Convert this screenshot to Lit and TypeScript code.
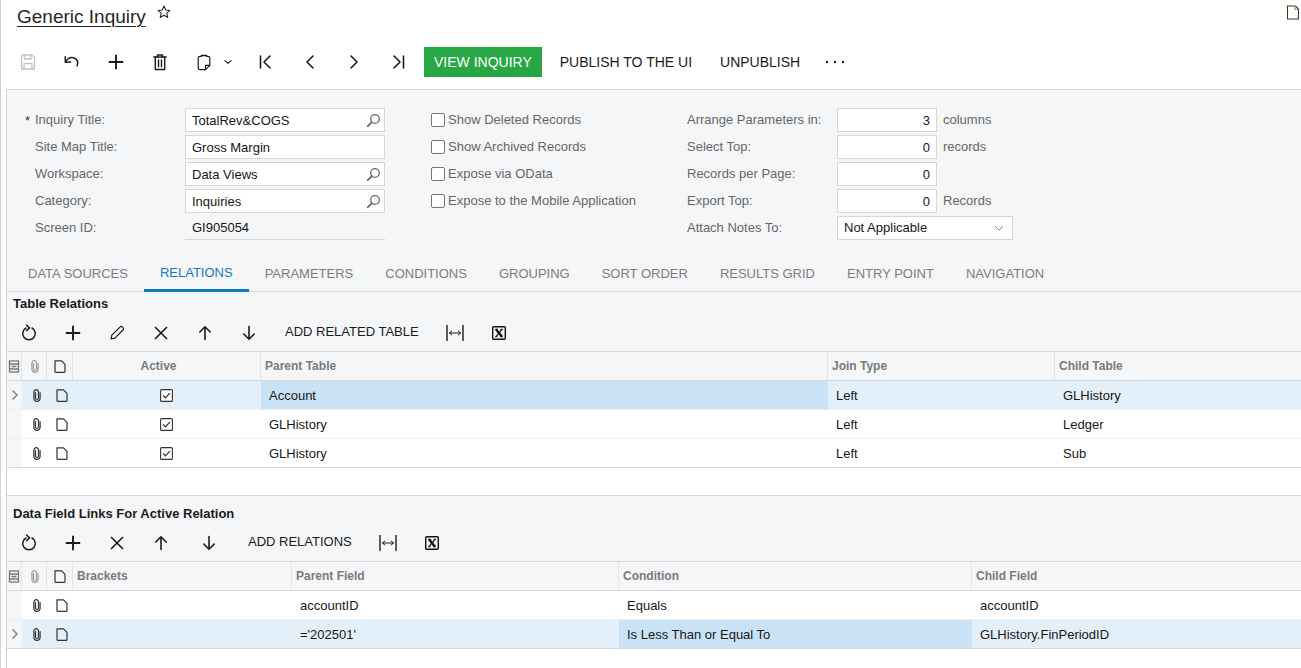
import { LitElement, html, css, svg, nothing } from "lit";
import { customElement } from "lit/decorators.js";

const ic = (body: unknown, size = 20, cls = "") =>
  html`<svg class="ic ${cls}" width=${size} height=${size} viewBox="0 0 20 20" fill="none" stroke="currentColor" stroke-width="1.4" stroke-linecap="round" stroke-linejoin="round">${body}</svg>`;

const I = {
  save: () => ic(svg`<path d="M3.500 3h10.500l2.500 2.500v11.500h-13z"/><path d="M6.500 3v4h6.500v-4"/><path d="M6 17v-5.500h8v5.500"/>`, 20, "dis"),
  undo: () => ic(svg`<path d="M3.500 10c2-3.600 5-5 8-4.300 3.700 1 5.300 4.800 3.600 8.300" stroke-width="1.500"/><path d="M3.200 4.800l.2 5.400 5.300-.3" stroke-width="1.500"/>`),
  plus: () => ic(svg`<path d="M10 2.800v14.400M2.800 10h14.400" stroke-width="1.900" stroke-linecap="butt"/>`),
  trash: () => ic(svg`<path d="M3.800 5h12.400"/><path d="M7.500 5v-2h5v2"/><path d="M5.300 5v12.500h9.400v-12.500"/><path d="M8.500 8v6.800M11.500 8v6.800"/>`, 20),
  copy: () => ic(svg`<path d="M7.500 4.300h-1.500c-1 0-1.800.8-1.800 1.800v9.800c0 1 .8 1.800 1.800 1.800h5.500l4.300-4.300v-7.300c0-1-.8-1.800-1.800-1.800h-1.500" stroke-width="1.200"/><path d="M7.500 3.500h5" stroke-width="1.600"/><path d="M11.500 17.700v-4.400h4.300" stroke-width="1.200"/>`),
  chev: () => ic(svg`<path d="M5.500 8l4.500 4 4.500-4" stroke-width="1.600"/>`, 14),
  ddl: () => html`<svg class="ic" width="10" height="10" viewBox="0 0 10 10" fill="none" stroke="#8a8a8a" stroke-width="1"><path d="M1 3.200l4 3.800 4-3.800"/></svg>`,
  first: () => ic(svg`<path d="M4.500 4v12M14 4l-6 6 6 6" stroke-width="1.600"/>`),
  prev: () => ic(svg`<path d="M13 4l-6 6 6 6" stroke-width="1.600"/>`),
  next: () => ic(svg`<path d="M7 4l6 6-6 6" stroke-width="1.600"/>`),
  last: () => ic(svg`<path d="M15.500 4v12M6 4l6 6-6 6" stroke-width="1.600"/>`),
  dots: () => html`<svg class="ic" width="20" height="20" viewBox="0 0 20 20" fill="currentColor"><circle cx="2" cy="10" r="1.200"/><circle cx="10" cy="10" r="1.200"/><circle cx="18" cy="10" r="1.200"/></svg>`,
  star: () => ic(svg`<path d="M10 2.500l2.200 5 5.300.5-4 3.500 1.200 5.300-4.700-2.800-4.700 2.800 1.200-5.300-4-3.500 5.300-.5z" stroke-width="1.300"/>`, 16),
  doc: () => html`<svg class="ic" width="14" height="15" viewBox="0 0 14 15" fill="none" stroke="#3a3a20" stroke-width="1.100"><path d="M1.500 1h8l3 3v10h-11z" fill="#fff"/><path d="M9 1v3.500h3.500" stroke="#8a9a40"/></svg>`,
  refresh: () => ic(svg`<path d="M13 5a6.300 6.300 0 1 1-6 0" stroke-width="1.500"/><path d="M7.500 2l3 2.900-3 2.900" stroke-width="1.500"/>`),
  pencil: () => ic(svg`<path d="M4 16l.8-3.800 8.400-8.400a1.400 1.400 0 0 1 2 0l1 1a1.400 1.400 0 0 1 0 2l-8.400 8.400z" stroke-width="1.200"/>`),
  x: () => ic(svg`<path d="M4 4l12 12M16 4l-12 12" stroke-width="1.600" stroke-linecap="butt"/>`),
  up: () => ic(svg`<path d="M10 16.500v-12.500M4.800 9l5.200-5.200 5.200 5.200" stroke-width="1.600"/>`),
  down: () => ic(svg`<path d="M10 3.500v12.500M4.800 11l5.200 5.200 5.200-5.200" stroke-width="1.600"/>`),
  fit: () => ic(svg`<path d="M2 2v16M18 2v16" stroke-width="1.400" stroke-linecap="butt"/><path d="M4.500 10h11M6.800 8l-2.300 2 2.300 2M13.200 8l2.300 2-2.300 2" stroke-width="1"/>`),
  excel: () => html`<svg class="ic" width="16" height="16" viewBox="0 0 16 16" fill="none"><rect x="1.700" y="1.700" width="12.600" height="12.600" rx="1" stroke="#111" stroke-width="1.400"/><path d="M5 4.300l6 7.400" stroke="#111" stroke-width="2.400"/><path d="M11 4.300l-6 7.400" stroke="#111" stroke-width="1.200"/><path d="M4 4.300h3M9.400 4.300h2.700M4 11.700h2.700M9 11.700h3" stroke="#111" stroke-width=".9"/></svg>`,
  search: () => html`<svg class="ic" width="15" height="15" viewBox="0 0 15 15" fill="none" stroke="#666" stroke-width="1.300" stroke-linecap="round"><circle cx="9" cy="6" r="4.300"/><path d="M5.800 9.200l-4 4" stroke-width="1.800"/></svg>`,
  selChev: () => html`<svg class="ic" width="12" height="12" viewBox="0 0 12 12" fill="none" stroke="#8a8a8a" stroke-width="1.600"><path d="M3.500 1.500l4.500 4.500-4.500 4.500"/></svg>`,
  clip: (c = "#333") => html`<svg class="ic" width="10" height="13" viewBox="0 0 10 13" fill="none" stroke=${c} stroke-width="1.200" stroke-linecap="round"><path d="M3.500 3.500v5.500a1.500 1.500 0 0 0 3 0v-6a2.300 2.300 0 0 0-4.600 0v6.300a3.100 3.100 0 0 0 6.200 0v-5.800"/></svg>`,
  note: () => html`<svg class="ic" width="12" height="13" viewBox="0 0 12 13" fill="none" stroke="#333" stroke-width="1.200" stroke-linejoin="round"><path d="M1 .8h6.500l3.500 3.500v7.400a.7.700 0 0 1-.7.700h-8.600a.7.700 0 0 1-.7-.7z"/></svg>`,
  group: () => html`<svg class="ic" width="12" height="13" viewBox="0 0 12 13" fill="none" stroke="#777" stroke-width="1.300"><rect x="1.500" y="1" width="9" height="11"/><path d="M1.500 4h9M3.500 6.500h5M1.500 9h9"/></svg>`,
  check: () => html`<svg class="ic" width="13" height="13" viewBox="0 0 13 13" fill="#fff" stroke="#333" stroke-width="1.100"><rect x=".6" y=".6" width="11.800" height="11.800" rx="1"/><path d="M3.200 6.500l2.300 2.400 4.300-4.800" fill="none" stroke-width="1.300"/></svg>`,
};

type Row = { cells: string[]; sel?: boolean; activeCell?: number; check?: boolean };

@customElement("app-root")
export class AppRoot extends LitElement {
  static styles = css`
    :host { display: block; width: 1301px; height: 668px; overflow: hidden; background: #fff;
      font-family: "Liberation Sans", Arial, sans-serif; font-size: 13px; color: #1c1c1c; }
    * { box-sizing: border-box; }
    .ic { display: block; flex: none; }
    .page { height: 668px; border-left: 1px solid #d2d2d2; padding-left: 5px; display: flex; flex-direction: column; }
    .title-row { height: 47px; display: flex; align-items: flex-start; padding: 0 1px 0 11px; }
    .title { font-size: 19px; line-height: 24px; margin-top: 5px; color: #262626; text-decoration: underline; text-decoration-thickness: 1px; text-underline-offset: 3px; }
    .star { margin: 4px 0 0 10px; color: #222; }
    .doc { margin: 5px 0 0 auto; }
    .tb { display: flex; align-items: center; color: #1b1b1b; }
    .tb.main { height: 42px; align-items: flex-start; }
    .btn { width: 44px; height: 30px; display: flex; align-items: center; justify-content: center; flex: none; }
    .btn.dis { color: #c4c4c4; }
    .btn.copy { width: 62px; justify-content: flex-start; gap: 7px; padding-left: 12px; }
    .btn.wide { width: 51px; }
    .txt { font-size: 14px; line-height: 30px; padding: 0 14px; white-space: nowrap; }
    .primary { background: #28a745; color: #fff; padding: 0 10px; margin: 0 4px; }
    .dotsbtn { width: 42px; }
    .body { flex: 1; border-left: 1px solid #d2d2d2; border-top: 1px solid #d6d6d6; display: flex; flex-direction: column; min-height: 0; }
    .top { background: #f5f6f8; }
    .form { display: flex; padding: 18px 0 0 18px; height: 165px; }
    .c1 { width: 360px; } .c2 { width: 256px; margin-left: 46px; } .c3 { width: 340px; }
    .fr { height: 24px; margin-bottom: 3px; display: flex; align-items: center; color: #666; white-space: nowrap; position: relative; }
    .c1 .fr label { width: 160px; padding-left: 10px; margin-top: -2px; position: relative; }
    .req { position: absolute; left: 0; top: 1px; color: #333; }
    .c3 .fr label { width: 150px; margin-top: -2px; }
    .inp { height: 24px; background: #fff; border: 1px solid #d4d6d9; color: #161616; display: flex; align-items: center; padding: 0 6px; justify-content: space-between; }
    .w200 { width: 200px; } .w100 { width: 100px; justify-content: flex-end; } .w176 { width: 176px; padding-right: 8px; }
    .w176 span { margin-top: -2px; }
    .w200 svg { margin-right: -3px; }
    .ro { width: 200px; height: 24px; padding: 0 7px; display: flex; align-items: center; color: #161616; border-bottom: 1px solid #d4d6d9; }
    .unit { margin-left: 6px; margin-top: -2px; }
    .cb { width: 14px; height: 14px; background: #fff; border: 1px solid #767676; border-radius: 2px; margin-right: 3px; flex: none; }
    .cbl { margin-top: -2px; }
    .tabs { display: flex; height: 37px; padding-left: 5px; border-bottom: 1px solid #d6d8db; font-size: 13px; color: #7c7c7c; }
    .tab { padding: 11px 16px 0; line-height: 16px; height: 37px; white-space: nowrap; }
    .tab.on { color: #1678bd; border-bottom: 3px solid #0d79bf; padding-top: 10px; }
    .sect { font-weight: bold; padding-left: 6px; line-height: 24px; height: 24px; color: #1a1a1a; }
    .sec2 { background: #f5f6f8; padding-top: 6px; border-top: 1px solid #d6d8db; }
    .t { height: 35px; align-items: flex-start; } .t .btn { height: 33px; } .t .txt { line-height: 31px; font-size: 13px; }
    .grid { border-top: 1px solid #d6d8db; }
    .row { display: grid; height: 29px; border-bottom: 1px solid #edf0f3; background: #fff; align-items: stretch; }
    .g1 .row { grid-template-columns: 15px 25px 26px 188px 567px 227px 1fr; }
    .g2 .row { grid-template-columns: 15px 25px 26px 219px 327px 353px 1fr; }
    .head.row { background: #f5f6f8; border-bottom: 1px solid #d6d8db; font-weight: bold; font-size: 12px; color: #7a7a7a; height: 29px; }
    .head .cell { border-right: 1px solid #e2e4e7; padding-left: 4px; color: #7a7a7a; }
    .head .cell:last-child { border-right: 0; }
    .cell { display: flex; align-items: center; padding-left: 8px; white-space: nowrap; color: #171717; min-width: 0; }
    .cell.ctr { justify-content: center; padding: 0 2px 0 0; }
    .head .cell.ctr { padding-left: 0; }
    .cell.ic-cell { justify-content: center; padding-left: 4px; }
    .head .cell.ic-cell { padding-left: 0; }
    .head .cell.clip-h { padding-left: 2px; }
    .head .cell.active-h { padding: 0 16px 0 0; }
    .cell.ind { background: #f5f6f8; padding: 0; justify-content: center; }
    .head .cell.ind { padding: 0; }
    .row.sel { background: #e3f0fa; }
    .cell.act { background: #c9e2f6; }
    .row:last-child { border-bottom-color: #d6d8db; }
    .gap { height: 27px; background: #fff; flex: none; }
    .rest { flex: 1; background: #fff; }
  `;

  private gridT(cls: string, head: string[], rows: Row[]) {
    return html`<div class="grid ${cls}">
      <div class="row head">
        <div class="cell ind">${I.group()}</div>
        <div class="cell ic-cell clip-h">${I.clip("#9a9a9a")}</div>
        <div class="cell ic-cell">${I.note()}</div>
        ${head.map((h) => html`<div class="cell ${h === "Active" ? "ctr active-h" : ""}">${h}</div>`)}
      </div>
      ${rows.map((r) => html`<div class="row ${r.sel ? "sel" : ""}">
        <div class="cell ind">${r.sel ? I.selChev() : nothing}</div>
        <div class="cell ic-cell">${I.clip()}</div>
        <div class="cell ic-cell">${I.note()}</div>
        ${r.cells.map((c, i) => html`<div class="cell ${i === r.activeCell ? "act" : ""} ${r.check && i === 0 ? "ctr" : ""}">${r.check && i === 0 ? I.check() : c}</div>`)}
      </div>`)}
    </div>`;
  }

  render() {
    const left = [
      { l: "Inquiry Title:", v: "TotalRev&COGS", s: true, req: true },
      { l: "Site Map Title:", v: "Gross Margin" },
      { l: "Workspace:", v: "Data Views", s: true },
      { l: "Category:", v: "Inquiries", s: true },
    ];
    const checks = ["Show Deleted Records", "Show Archived Records", "Expose via OData", "Expose to the Mobile Application"];
    const params = [
      { l: "Arrange Parameters in:", v: "3", u: "columns" },
      { l: "Select Top:", v: "0", u: "records" },
      { l: "Records per Page:", v: "0", u: "" },
      { l: "Export Top:", v: "0", u: "Records" },
    ];
    const tabs = ["DATA SOURCES", "RELATIONS", "PARAMETERS", "CONDITIONS", "GROUPING", "SORT ORDER", "RESULTS GRID", "ENTRY POINT", "NAVIGATION"];
    return html`<div class="page">
      <div class="title-row">
        <span class="title">Generic Inquiry</span>
        <span class="star">${I.star()}</span>
        <span class="doc">${I.doc()}</span>
      </div>
      <div class="tb main">
        <span class="btn dis">${I.save()}</span>
        <span class="btn">${I.undo()}</span>
        <span class="btn">${I.plus()}</span>
        <span class="btn">${I.trash()}</span>
        <span class="btn copy">${I.copy()}${I.chev()}</span>
        <span class="btn">${I.first()}</span>
        <span class="btn">${I.prev()}</span>
        <span class="btn">${I.next()}</span>
        <span class="btn">${I.last()}</span>
        <span class="txt primary">VIEW INQUIRY</span>
        <span class="txt">PUBLISH TO THE UI</span>
        <span class="txt">UNPUBLISH</span>
        <span class="btn dotsbtn">${I.dots()}</span>
      </div>
      <div class="body">
        <div class="top">
          <div class="form">
            <div class="c1">
              ${left.map((f) => html`<div class="fr">
                <label>${f.req ? html`<span class="req">*</span>` : nothing}${f.l}</label>
                <div class="inp w200"><span>${f.v}</span>${f.s ? I.search() : nothing}</div>
              </div>`)}
              <div class="fr"><label>Screen ID:</label><div class="ro">GI905054</div></div>
            </div>
            <div class="c2">
              ${checks.map((c) => html`<div class="fr"><span class="cb"></span><span class="cbl">${c}</span></div>`)}
            </div>
            <div class="c3">
              ${params.map((p) => html`<div class="fr">
                <label>${p.l}</label>
                <div class="inp w100">${p.v}</div>
                ${p.u ? html`<span class="unit">${p.u}</span>` : nothing}
              </div>`)}
              <div class="fr"><label>Attach Notes To:</label>
                <div class="inp w176"><span>Not Applicable</span>${I.ddl()}</div>
              </div>
            </div>
          </div>
          <div class="tabs">
            ${tabs.map((t) => html`<div class="tab ${t === "RELATIONS" ? "on" : ""}">${t}</div>`)}
          </div>
          <div class="sect">Table Relations</div>
          <div class="tb t">
            <span class="btn">${I.refresh()}</span>
            <span class="btn">${I.plus()}</span>
            <span class="btn">${I.pencil()}</span>
            <span class="btn">${I.x()}</span>
            <span class="btn">${I.up()}</span>
            <span class="btn">${I.down()}</span>
            <span class="txt">ADD RELATED TABLE</span>
            <span class="btn">${I.fit()}</span>
            <span class="btn">${I.excel()}</span>
          </div>
        </div>
        ${this.gridT("g1", ["Active", "Parent Table", "Join Type", "Child Table"], [
          { cells: ["", "Account", "Left", "GLHistory"], sel: true, activeCell: 1, check: true },
          { cells: ["", "GLHistory", "Left", "Ledger"], check: true },
          { cells: ["", "GLHistory", "Left", "Sub"], check: true },
        ])}
        <div class="gap"></div>
        <div class="sec2">
          <div class="sect">Data Field Links For Active Relation</div>
          <div class="tb t">
            <span class="btn">${I.refresh()}</span>
            <span class="btn">${I.plus()}</span>
            <span class="btn">${I.x()}</span>
            <span class="btn">${I.up()}</span>
            <span class="btn wide">${I.down()}</span>
            <span class="txt">ADD RELATIONS</span>
            <span class="btn">${I.fit()}</span>
            <span class="btn">${I.excel()}</span>
          </div>
        </div>
        ${this.gridT("g2", ["Brackets", "Parent Field", "Condition", "Child Field"], [
          { cells: ["", "accountID", "Equals", "accountID"] },
          { cells: ["", "='202501'", "Is Less Than or Equal To", "GLHistory.FinPeriodID"], sel: true, activeCell: 2 },
        ])}
        <div class="rest"></div>
      </div>
    </div>`;
  }
}
